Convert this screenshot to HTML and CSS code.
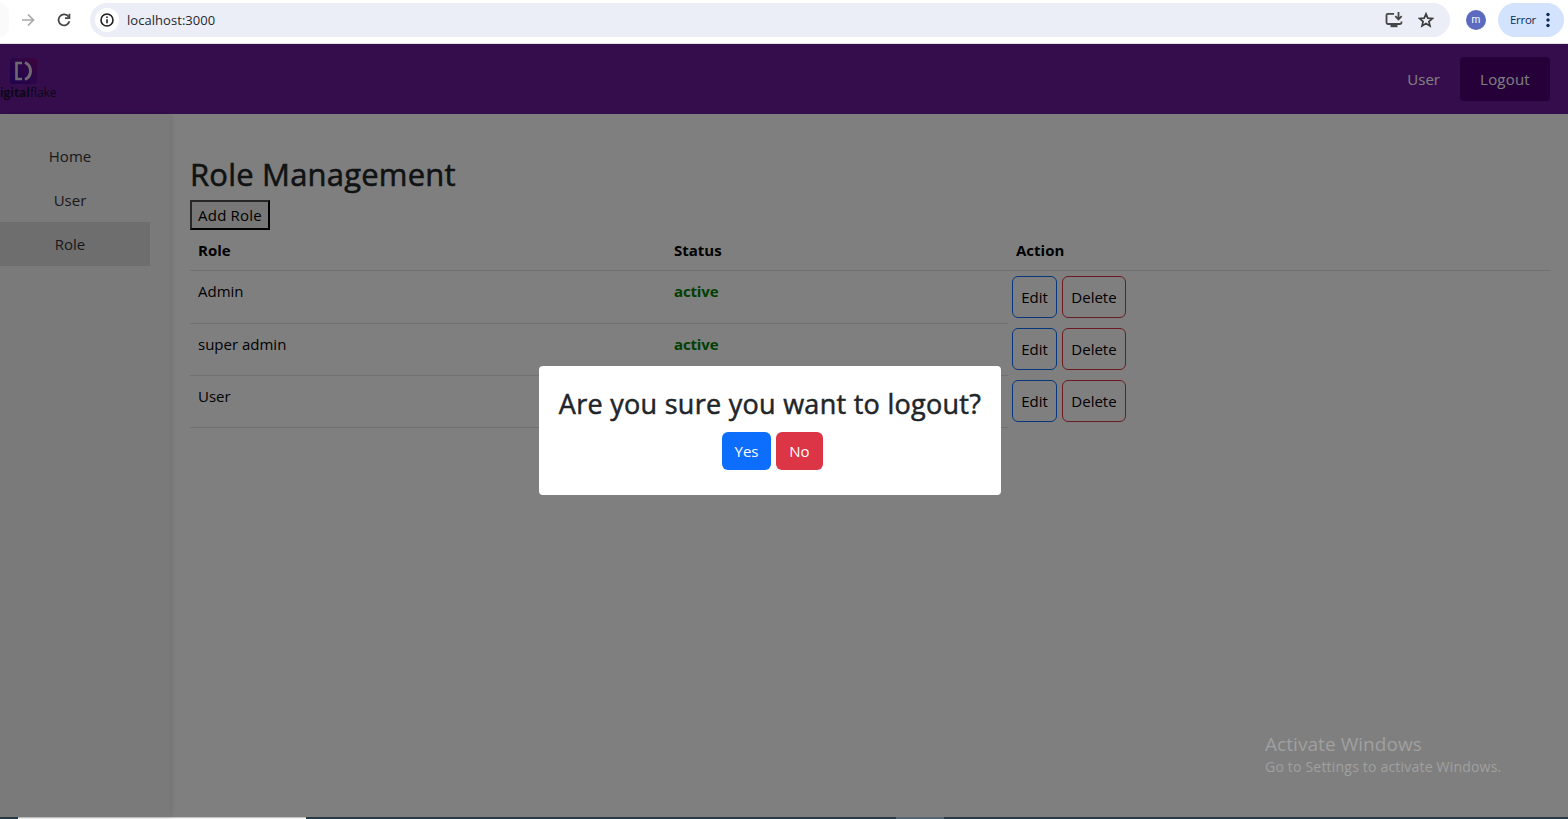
FILE: index.html
```html
<!DOCTYPE html>
<html lang="en">
<head>
<meta charset="utf-8">
<title>Role Management</title>
<link rel="stylesheet" href="styles.css">
</head>
<body>
<div class="browser">
  <div class="back-stub"></div>
  <svg class="nav-forward" width="14" height="14" viewBox="0 0 14 14" fill="none" stroke="#a9a9a9" stroke-width="1.7"><path d="M1 7h11M7 1.500l5.500 5.500L7 12.500"/></svg>
  <svg class="nav-reload" width="14" height="14" viewBox="0 0 14 14" fill="none" stroke="#444746" stroke-width="1.800"><path d="M11.600 3.800A5.500 5.500 0 1 0 12.400 8.300"/><path d="M12.400 0.800v4.300H8"/></svg>
  <div class="omnibox">
    <span class="site-info"><svg width="14" height="14" viewBox="0 0 14 14" fill="none" stroke="#1f1f1f" stroke-width="1.600"><circle cx="7" cy="7" r="6"/><path d="M7 6.200v4M7 3.500v1.600"/></svg></span>
    <span class="url">localhost:3000</span>
    <svg class="install" width="18" height="16" viewBox="0 0 18 16" fill="none" stroke="#444746" stroke-width="1.800"><path d="M9 1.800H3q-1.500 0-1.500 1.500v7.200q0 1.500 1.500 1.500h12q1.500 0 1.500-1.500V9.500"/><path d="M5.500 13.900h7" stroke-width="2.600"/><path d="M13.500 0v7M10.300 4.200l3.200 3.200 3.200-3.200"/></svg>
    <svg class="star" width="16" height="16" viewBox="0 0 16 16" fill="none" stroke="#3c3f3e" stroke-width="1.700"><path d="M8 1.900l1.800 4.200 4.600.4-3.500 3 1.100 4.500L8 11.600 4 14l1.100-4.500-3.500-3 4.600-.4z"/></svg>
  </div>
  <span class="avatar">m</span>
  <div class="error-chip"><span>Error</span><svg width="4" height="16" viewBox="0 0 4 16" fill="#0b2a5c"><circle cx="2" cy="2.500" r="1.700"/><circle cx="2" cy="8" r="1.700"/><circle cx="2" cy="13.500" r="1.700"/></svg></div>
</div>

<div class="app">
  <header class="topbar">
    <div class="logo">
      <svg width="27" height="26" viewBox="0 0 27 26"><defs><linearGradient id="mark" x1="0" y1="1" x2="1" y2="0"><stop offset="0" stop-color="#3a069c"/><stop offset=".5" stop-color="#580c90"/><stop offset="1" stop-color="#7c0a7c"/></linearGradient></defs><rect width="27" height="26" rx="3" fill="url(#mark)"/><path d="M12 5H6.500v16H12" fill="none" stroke="#dcd4e4" stroke-width="2.600"/><path d="M15 4.500q5.500 2.500 5.500 8.500T15 21.500" fill="none" stroke="#dcd4e4" stroke-width="3"/></svg>
      <div class="wordmark"><b>igital</b>flake</div>
    </div>
    <nav class="account"><span class="who">User</span><button class="logout">Logout</button></nav>
  </header>
  <div class="body">
    <aside class="sidebar">
      <a class="item home">Home</a>
      <a class="item">User</a>
      <a class="item active">Role</a>
    </aside>
    <main class="content">
      <h2 class="title">Role Management</h2>
      <button class="add">Add Role</button>
      <div class="table">
        <div class="row head"><span>Role</span><span>Status</span><span>Action</span></div>
        <div class="row first"><span>Admin</span><span class="status">active</span><span class="actions"><button class="act edit">Edit</button><button class="act delete">Delete</button></span></div>
        <div class="row"><span>super admin</span><span class="status">active</span><span class="actions"><button class="act edit">Edit</button><button class="act delete">Delete</button></span></div>
        <div class="row"><span>User</span><span class="status"></span><span class="actions"><button class="act edit">Edit</button><button class="act delete">Delete</button></span></div>
      </div>
    </main>
  </div>
  <div class="overlay">
    <div class="dialog">
      <h3 class="question">Are you sure you want to logout?</h3>
      <div class="choices"><button class="btn yes">Yes</button><button class="btn no">No</button></div>
    </div>
  </div>
  <div class="activate"><div class="activate-title">Activate Windows</div><div class="activate-text">Go to Settings to activate Windows.</div></div>
</div>
<div class="taskbar"><span class="search"></span><span class="task"></span></div>
</body>
</html>
```

FILE: styles.css
```css
* { box-sizing: border-box; }
body {
  margin: 0;
  width: 1568px;
  height: 819px;
  overflow: hidden;
  display: flex;
  flex-direction: column;
  font: 15px/24px "Open Sans", "Noto Sans", sans-serif;
  color: #000;
  background: #fff;
}
button { font: inherit; color: inherit; margin: 0; white-space: nowrap; }
svg { display: block; flex: none; }

.browser { height: 44px; flex: none; display: flex; align-items: center; padding-bottom: 3px; border-bottom: 1px solid #e2e3e8; background: #fff; }
.back-stub { width: 9px; height: 34px; border-radius: 0 17px 17px 0; background: #fafafa; margin-right: 12px; }
.nav-forward { margin-right: 22px; }
.omnibox { width: 1360px; height: 34px; margin-left: 19px; border-radius: 17px; background: #ebeef7; display: flex; align-items: center; padding: 0 16px 0 5px; }
.site-info { width: 24px; height: 24px; border-radius: 50%; background: #fff; display: grid; place-items: center; }
.url { margin-left: 8px; font-size: 13px; letter-spacing: .05px; color: #26282c; }
.install { margin-left: auto; }
.star { margin-left: 15px; }
.avatar { width: 20px; height: 20px; margin-left: 16px; border-radius: 50%; background: #5c6bc0; color: #fff; font: 400 10px/19px Roboto, sans-serif; text-align: center; }
.error-chip { width: 66px; height: 34px; margin-left: 12px; border-radius: 17px; background: #d3e3fd; color: #0b2a5c; display: flex; align-items: center; justify-content: space-between; padding: 0 14px 0 12px; font-size: 11.500px; letter-spacing: -.3px; }

.app { position: relative; height: 773px; flex: none; display: flex; flex-direction: column; }
.topbar { height: 70px; flex: none; background: #6a1b9a; display: flex; justify-content: space-between; align-items: center; padding-right: 18px; }
.logo { width: 60px; }
.logo svg { margin-left: 10px; }
.wordmark { padding-top: 1px; font: 12px/16px "Open Sans", sans-serif; letter-spacing: -.05px; color: #17102e; white-space: nowrap; }
.account { display: flex; align-items: center; gap: 20px; color: #fff; }
.logout { width: 90px; height: 44px; border: 0; border-radius: 4px; background: #4a0072; letter-spacing: .2px; }
.body { flex: 1; display: flex; }
.sidebar { width: 170px; padding: 20px 20px 0 0; background: #f4f4f4; box-shadow: 2px 0 5px rgba(0,0,0,.1); color: #333; }
.item { display: block; height: 44px; padding: 10px; text-align: center; padding-right: 20px; }
.active { background: #ddd; }
.content { flex: 1; padding: 41px 18px 0 20px; }
.title { margin: 0 0 7px; font-size: 31px; line-height: 38px; font-weight: 400; -webkit-text-stroke: .55px; color: #212529; letter-spacing: .2px; }
.add { display: block; width: 80px; height: 30px; padding: 0; line-height: 24px; letter-spacing: .2px; border: 2px outset #000; border-color: #4c4c4c #000 #000 #4c4c4c; background: #efefef; }
.row { display: grid; grid-template-columns: 476px 342px 542px; height: 52px; }
.row.first { height: 53px; }
.row > span { padding: 8px; border-bottom: 1px solid #dee2e6; }
.row.head { height: 41px; font-weight: 700; }
.row .status { color: #008000; font-weight: 700; letter-spacing: -.15px; }
.row .actions { display: flex; gap: 5px; padding: 4px 4px 0; border: 0; }
.row.first .actions { padding-top: 5px; }
.act { height: 42px; padding: 0; border: 1px solid; border-radius: 6px; background: transparent; }
.edit { width: 45px; border-color: #0d6efd; }
.delete { width: 64px; border-color: #dc3545; }

.overlay { position: absolute; inset: 0; background: rgba(0,0,0,.5); }
.dialog { position: absolute; left: 539px; top: 322px; width: 462px; height: 129px; padding: 21px 20px 20px; border-radius: 4px; background: #fff; text-align: center; }
.question { margin: 0 -5px 11px; font-size: 27px; line-height: 34px; font-weight: 400; -webkit-text-stroke: .5px; letter-spacing: .28px; color: #212529; white-space: nowrap; }
.choices { display: flex; justify-content: center; gap: 5px; padding-left: 5px; }
.btn { height: 38px; border: 0; border-radius: 6px; color: #fff; padding: 0; }
.yes { width: 49px; background: #0d6efd; }
.no { width: 47px; background: #dc3545; }
.activate { position: absolute; left: 1265px; top: 687px; color: #a0a0a0; white-space: nowrap; }
.activate-title { font-size: 19px; line-height: 27px; letter-spacing: .06px; }
.activate-text { font-size: 14px; line-height: 18px; letter-spacing: .2px; }

.taskbar { height: 2px; background: #263b45; display: flex; }
.search { width: 288px; margin-left: 18px; background: #f4f4f4; border-top: 1px solid #c4c4c4; }
.task { width: 48px; margin-left: 590px; background: #566572; }
```
